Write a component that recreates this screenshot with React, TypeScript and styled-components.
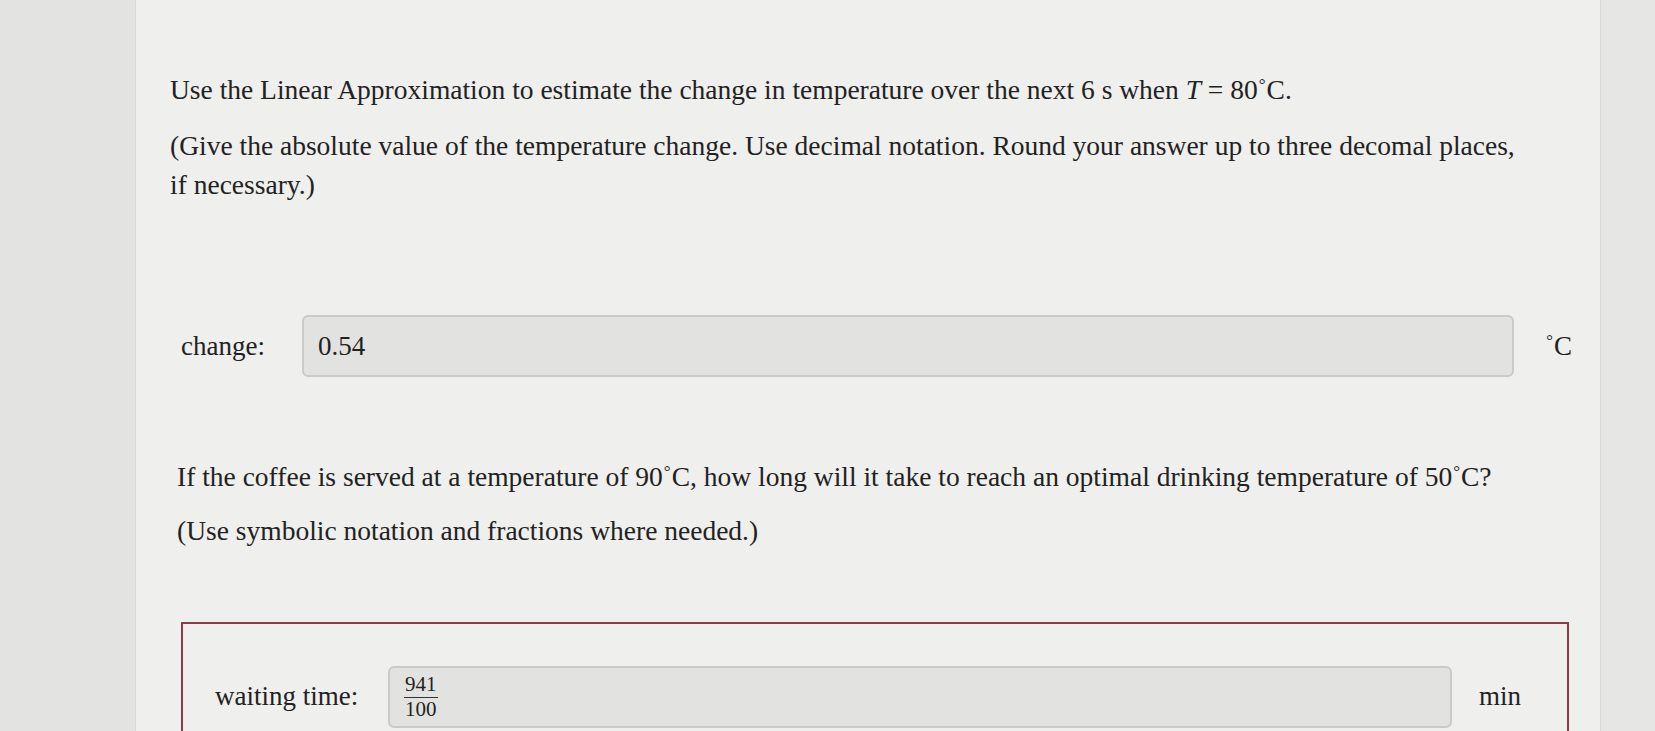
import styled, { createGlobalStyle } from "styled-components";

const GlobalStyle = createGlobalStyle`
  html, body {
    margin: 0;
    padding: 0;
    background: #e4e4e2;
  }
  body {
    font-family: "Liberation Serif", "Times New Roman", serif;
    color: #222;
  }
`;

const Screen = styled.div`
  display: flex;
  height: 731px;
  overflow: hidden;
`;

const Strip = styled.div<{ $w: number; $bg: string }>`
  width: ${(p) => p.$w}px;
  flex-shrink: 0;
  background: ${(p) => p.$bg};
`;

const Panel = styled.div`
  flex: 1;
  background: #efefed;
  border-left: 1px solid #d9d9d7;
  border-right: 1px solid #d9d9d7;
  padding: 65px 28px 0 34px;
  box-sizing: border-box;
`;

const Para = styled.p<{ $mb?: number }>`
  margin: 0 0 ${(p) => p.$mb ?? 17}px;
  font-size: 27.5px;
  line-height: 39px;
  padding-right: 40px;
`;

const Section = styled.div<{ $indent?: number; $top?: number }>`
  margin-left: ${(p) => p.$indent ?? 0}px;
  margin-top: ${(p) => p.$top ?? 0}px;
`;

const AnswerRow = styled.div<{ $labelW: number; $pad: number }>`
  display: flex;
  align-items: center;
  padding-left: ${(p) => p.$pad}px;
  font-size: 27px;

  & > label {
    width: ${(p) => p.$labelW}px;
    flex-shrink: 0;
  }
`;

const InputBox = styled.div`
  flex: 1;
  height: 62px;
  box-sizing: border-box;
  background: #e2e2e0;
  border: 2px solid #cacac8;
  border-radius: 6px;
  display: flex;
  align-items: center;
  padding-left: 14px;
  font-size: 27px;
`;

const Unit = styled.span<{ $gap: number }>`
  margin-left: ${(p) => p.$gap}px;
  white-space: nowrap;
`;

const Frame = styled.div`
  margin-top: 72px;
  margin-left: 4px;
  margin-right: 3px;
  border: 2px solid #8a3b48;
  border-bottom: none;
  padding: 42px 46px 0 0;
  height: 120px;
`;

const Frac = styled.span`
  display: inline-flex;
  flex-direction: column;
  align-items: center;
  font-size: 21px;
  line-height: 23px;

  & > span:first-child {
    border-bottom: 1.5px solid #333;
    padding: 0 1px 1px;
  }
`;

const Ring = styled.span`
  font-size: 0.62em;
  vertical-align: 0.55em;
  margin: 0 1px;
`;

const Deg = () => (
  <>
    <Ring>&deg;</Ring>C
  </>
);

export default function App() {
  return (
    <>
      <GlobalStyle />
      <Screen>
        <Strip $w={135} $bg="#e3e3e1" />
        <Panel>
          <Para>
            Use the Linear Approximation to estimate the change in temperature over the next 6 s when{" "}
            <i>T</i> = 80<Deg />.
          </Para>
          <Para>
            (Give the absolute value of the temperature change. Use decimal notation. Round your answer up
            to three decomal places, if necessary.)
          </Para>

          <Section $top={111}>
            <AnswerRow $labelW={121} $pad={11}>
              <label>change:</label>
              <InputBox>0.54</InputBox>
              <Unit $gap={31}>
                <Deg />
              </Unit>
            </AnswerRow>
          </Section>

          <Section $indent={7} $top={75}>
            <Para $mb={14}>
              If the coffee is served at a temperature of 90<Deg />, how long will it take to reach an
              optimal drinking temperature of 50<Deg />?
            </Para>
            <Para $mb={0}>(Use symbolic notation and fractions where needed.)</Para>

            <Frame>
              <AnswerRow $labelW={173} $pad={32}>
                <label>waiting time:</label>
                <InputBox>
                  <Frac>
                    <span>941</span>
                    <span>100</span>
                  </Frac>
                </InputBox>
                <Unit $gap={27}>min</Unit>
              </AnswerRow>
            </Frame>
          </Section>
        </Panel>
        <Strip $w={54} $bg="#e6e6e4" />
      </Screen>
    </>
  );
}
